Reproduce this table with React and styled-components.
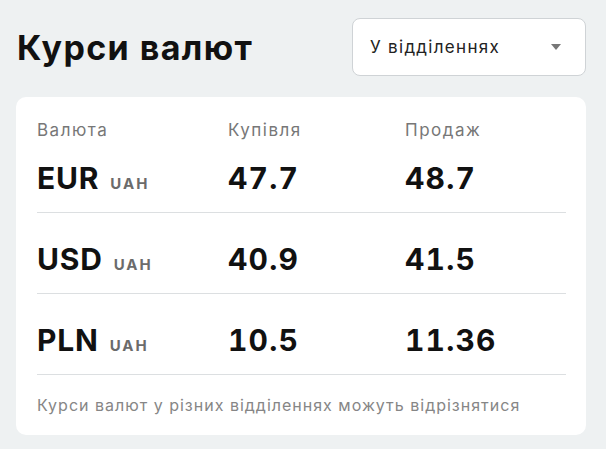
import React from 'react';
import styled, { createGlobalStyle } from 'styled-components';

const GlobalStyle = createGlobalStyle`
  html, body {
    margin: 0;
    background: #eef1f2;
    font-family: Inter, "Noto Sans", sans-serif;
    color: #111;
  }
`;

const Page = styled.div`
  width: 606px;
  padding: 18px 20px 14px 16px;
  box-sizing: border-box;
`;

const Header = styled.div`
  display: flex;
  align-items: center;
  justify-content: space-between;
  height: 58px;
`;

const Title = styled.h1`
  margin: 0 0 0 1px;
  font-size: 34px;
  font-weight: 700;
  letter-spacing: 1.4px;
`;

const Select = styled.div`
  width: 234px;
  height: 58px;
  box-sizing: border-box;
  display: flex;
  align-items: center;
  justify-content: space-between;
  padding: 0 24px 0 17px;
  background: #fff;
  border: 1px solid #cfd3d6;
  border-radius: 8px;
  font-size: 17px;
  letter-spacing: 1.3px;
  color: #222;
`;

const Caret = styled.span`
  width: 0;
  height: 0;
  border-left: 5px solid transparent;
  border-right: 5px solid transparent;
  border-top: 6px solid #777;
`;

const Card = styled.div`
  margin-top: 21px;
  background: #fff;
  border-radius: 10px;
  padding: 20px 20px 0 21px;
  height: 338px;
  box-sizing: border-box;
`;

const HeadRow = styled.div`
  display: grid;
  grid-template-columns: 191px 177px 1fr;
  align-items: center;
  height: 25px;
`;

const Row = styled.div`
  display: grid;
  grid-template-columns: 191px 177px 1fr;
  align-items: end;
  box-sizing: border-box;
  height: ${p => p.$h}px;
  padding-bottom: 19px;
  border-bottom: 1px solid #dcdfe1;
`;

const Label = styled.div`
  font-size: 17px;
  letter-spacing: 1.5px;
  color: #777;
`;

const Code = styled.div`
  font-size: 30px;
  line-height: 1;
  font-weight: 700;
  letter-spacing: 0.8px;
  display: flex;
  align-items: baseline;
  gap: 11px;
`;

const Unit = styled.span`
  font-size: 15px;
  font-weight: 700;
  letter-spacing: 2px;
  color: #6b6b6b;
`;

const Value = styled.div`
  font-size: 30px;
  line-height: 1;
  font-weight: 700;
  font-variant-numeric: tabular-nums;
  letter-spacing: 1.2px;
`;

const Note = styled.div`
  padding-top: 20px;
  font-size: 16px;
  letter-spacing: 1px;
  color: #868686;
`;

const rates = [
  { code: 'EUR', buy: '47.7', sell: '48.7' },
  { code: 'USD', buy: '40.9', sell: '41.5' },
  { code: 'PLN', buy: '10.5', sell: '11.36' },
];

export default function App() {
  return (
    <Page>
      <GlobalStyle />
      <Header>
        <Title>Курси валют</Title>
        <Select>
          <span>У відділеннях</span>
          <Caret />
        </Select>
      </Header>
      <Card>
        <HeadRow>
          <Label>Валюта</Label>
          <Label>Купівля</Label>
          <Label>Продаж</Label>
        </HeadRow>
        {rates.map((r, i) => (
          <Row key={r.code} $h={i === 0 ? 71 : 81}>
            <Code>
              {r.code}
              <Unit>UAH</Unit>
            </Code>
            <Value>{r.buy}</Value>
            <Value>{r.sell}</Value>
          </Row>
        ))}
        <Note>Курси валют у різних відділеннях можуть відрізнятися</Note>
      </Card>
    </Page>
  );
}
